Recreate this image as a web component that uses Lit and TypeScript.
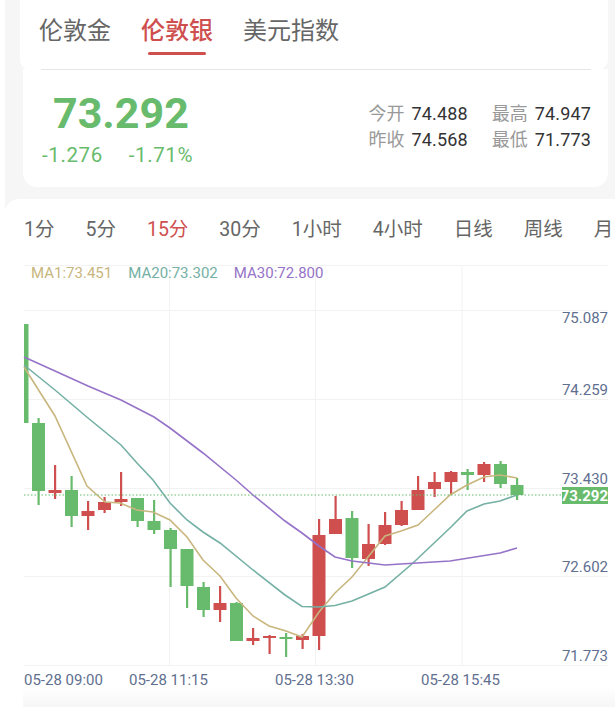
import { LitElement, html, css, svg } from "lit";
import { customElement } from "lit/decorators.js";

type C = [number, number, number, number, number, number];
const GREEN = "#68bb6c";
const RED = "#cf4f4f";
// center x, open(top body), bottom body, wick top, wick bottom, 1=red 0=green
const CANDLES: C[] = [
  [38.5, 423, 491, 418, 505, 0],
  [55, 490, 493, 465, 499, 1],
  [71.5, 490, 516, 476, 527, 0],
  [88, 511, 516, 501, 530, 1],
  [104.5, 502, 510, 497, 513, 1],
  [121, 499, 502, 472, 506, 1],
  [137.5, 498, 521, 498, 527, 0],
  [154, 521, 530, 500, 534, 0],
  [170.5, 530, 549, 528, 587, 0],
  [187, 549, 586, 549, 608, 0],
  [203.5, 587, 610, 582, 617, 0],
  [220, 603, 610, 586, 622, 1],
  [236.5, 603, 641, 602, 641, 0],
  [253, 638, 641, 628, 645, 1],
  [269.5, 636, 638, 635, 654, 1],
  [286, 637, 639, 633, 657, 0],
  [302.5, 636, 640, 634, 649, 1],
  [319, 535, 636, 519, 650, 1],
  [335.5, 519, 534, 496, 534, 1],
  [352, 518, 558, 511, 568, 0],
  [368.5, 544, 559, 524, 566, 1],
  [385, 525, 544, 512, 545, 1],
  [401.5, 510, 525, 501, 526, 1],
  [418, 490, 510, 476, 510, 1],
  [434.5, 482, 489, 472, 497, 1],
  [451, 472, 482, 471, 495, 1],
  [467.5, 472, 475, 469, 490, 0],
  [484, 464, 475, 462, 482, 1],
  [500.5, 464, 484, 461, 488, 0],
  [517, 485, 495, 478, 500, 0],
];
const MA1 = "24,367 55,416 87,486 105,502 120,503 137,510 153,512 170,520 187,537 203,560 220,576 236,598 253,616 269,626 286,631 302,637 319,612 335,593 352,577 368,557 385,536 401,531 418,525 434,510 450,495 467,485 484,477 500,475 517,478";
const MA20 = "24,365 55,390 88,418 121,445 137,463 153,480 170,503 187,520 203,532 220,543 253,570 285,595 302,606.5 319,607 335,605.5 352,601 385,587 413,563 451,527 467,511 484,504 500,501 517,495";
const MA30 = "24,357 55,371 88,386 121,400 154,417 170,428 203,453 236,480 253,495 285,521 302,533 319,546 335,557 352,561 385,565 417,563 450,561 500,553 517,548";
const AXIS: [string, number][] = [["75.087", 323], ["74.259", 395], ["73.430", 484], ["72.602", 572], ["71.773", 661]];
const TIMES: [string, number][] = [["05-28 09:00", 24], ["05-28 11:15", 129], ["05-28 13:30", 275], ["05-28 15:45", 421]];
const PERIODS = ["1分", "5分", "15分", "30分", "1小时", "4小时", "日线", "周线", "月"];

@customElement("app-root")
export class AppRoot extends LitElement {
  static styles = css`
    :host {
      display: block;
      width: 615px;
      height: 707px;
      overflow: hidden;
      background: #fff;
      font-family: Roboto, "Noto Sans CJK SC", sans-serif;
    }
    .panel { margin-left: 5px; height: 707px; background: #f6f6f6; overflow: hidden; }
    .top {
      margin: 0 7px 0 15px;
      height: 70px;
      background: #fff;
      border-radius: 0 0 10px 10px;
      display: flex;
      padding-left: 19px;
      gap: 30px;
      box-sizing: border-box;
    }
    .tab { position: relative; font-size: 24px; line-height: 32px; padding-top: 15px; color: #666; }
    .tab.on { color: #cf4f4f; font-weight: 500; }
    .tab.on::after {
      content: "";
      position: absolute;
      left: 7px;
      right: 7px;
      top: 52px;
      height: 3px;
      border-radius: 2px;
      background: #cf4f4f;
    }
    .quote {
      margin: -1px 7px 0 18px;
      height: 118px;
      box-sizing: border-box;
      background: #fff;
      border-radius: 0 0 14px 14px;
      position: relative;
      display: flex;
      justify-content: space-between;
      padding: 0 17px 0 19px;
    }
    .rule { position: absolute; left: 18px; right: 17px; top: 0; height: 1px; background: #e6e6e6; }
    .price { font-size: 43px; line-height: 50px; font-weight: 700; color: ${css([GREEN] as any)}; margin: 19px 0 0 11px; }
    .chg { display: flex; gap: 26px; font-size: 20.5px; line-height: 26px; color: ${css([GREEN] as any)}; margin-top: 4px; letter-spacing: 0.6px; }
    .stats { display: grid; grid-template-columns: auto auto; column-gap: 24px; row-gap: 0; margin-top: 32px; align-content: start; }
    .stat { display: flex; gap: 7px; font-size: 18px; line-height: 26px; color: #999; }
    .stat b { font-weight: 400; color: #333; letter-spacing: 0.15px; }
    .card { margin-top: 12px; height: 508px; background: #fff; border-radius: 14px 0 0 0; }
    .periods {
      display: flex;
      gap: 31px;
      padding: 18px 0 0 19px;
      height: 66px;
      box-sizing: border-box;
      font-size: 19.5px;
      line-height: 26px;
      color: #666;
      white-space: nowrap;
    }
    .periods .active { color: #cf4f4f; }
    .chart { position: relative; height: 442px; }
    .chart svg { display: block; }
    .legend { position: absolute; left: 26px; top: 0; display: flex; gap: 16px; font-size: 15px; line-height: 17px; }
    .m1 { color: #c8b67e; }
    .m20 { color: #74b0a4; }
    .m30 { color: #9673c8; }
    .fade {
      position: absolute;
      left: 18px;
      right: 0;
      bottom: 0;
      height: 20px;
      background: linear-gradient(#fff, #f6f6f6);
    }
    .grid { stroke: #f2f2f2; stroke-width: 1; }
    .axis { font-size: 15px; fill: #5f6f8f; }
    .lastv { font-size: 15px; font-weight: 700; fill: #fff; }
  `;

  private candle(c: C) {
    const [x, t, b, wt, wb, red] = c;
    const col = red ? RED : GREEN;
    return svg`<rect x=${x - 1} y=${wt} width="2.2" height=${wb - wt} fill=${col}></rect>
      <rect x=${x - 6.5} y=${t} width="13" height=${b - t} fill=${col}></rect>`;
  }

  render() {
    const hl = [265, 310, 399, 488, 576, 665];
    const vl = [169.5, 315.5, 462];
    return html`<div class="panel">
      <div class="top">
        <div class="tab">伦敦金</div>
        <div class="tab on">伦敦银</div>
        <div class="tab">美元指数</div>
      </div>
      <div class="quote">
        <div class="rule"></div>
        <div>
          <div class="price">73.292</div>
          <div class="chg"><span>-1.276</span><span>-1.71%</span></div>
        </div>
        <div class="stats">
          <div class="stat">今开<b>74.488</b></div>
          <div class="stat">最高<b>74.947</b></div>
          <div class="stat">昨收<b>74.568</b></div>
          <div class="stat">最低<b>71.773</b></div>
        </div>
      </div>
      <div class="card">
        <div class="periods">
          ${PERIODS.map((p) => html`<span class=${p === "15分" ? "active" : ""}>${p}</span>`)}
        </div>
        <div class="chart">
          <svg width="610" height="442" viewBox="5 265 610 442">
            ${hl.map((y) => svg`<line class="grid" x1="24" x2="608" y1=${y + 0.5} y2=${y + 0.5}></line>`)}
            ${vl.map((x) => svg`<line class="grid" x1=${x} x2=${x} y1="265" y2="665"></line>`)}
            <rect x="24" y="324" width="4.5" height="99" fill=${GREEN}></rect>
            ${CANDLES.map((c) => this.candle(c))}
            <polyline points=${MA1} fill="none" stroke="#c8b67e" stroke-width="1.6"></polyline>
            <polyline points=${MA20} fill="none" stroke="#74b0a4" stroke-width="1.6"></polyline>
            <polyline points=${MA30} fill="none" stroke="#9673c8" stroke-width="1.6"></polyline>
            <line x1="24" x2="562" y1="495" y2="495" stroke=${GREEN} stroke-width="1.2" stroke-dasharray="1.5 2"></line>
            ${AXIS.map(([t, y]) => svg`<text class="axis" x="608" y=${y} text-anchor="end">${t}</text>`)}
            <rect x="562" y="487" width="46" height="17" fill=${GREEN}></rect>
            <text class="lastv" x="608" y="501" text-anchor="end">73.292</text>
            ${TIMES.map(([t, x]) => svg`<text class="axis" x=${x} y="685">${t}</text>`)}
          </svg>
          <div class="legend">
            <span class="m1">MA1:73.451</span>
            <span class="m20">MA20:73.302</span>
            <span class="m30">MA30:72.800</span>
          </div>
          <div class="fade"></div>
        </div>
      </div>
    </div>`;
  }
}
